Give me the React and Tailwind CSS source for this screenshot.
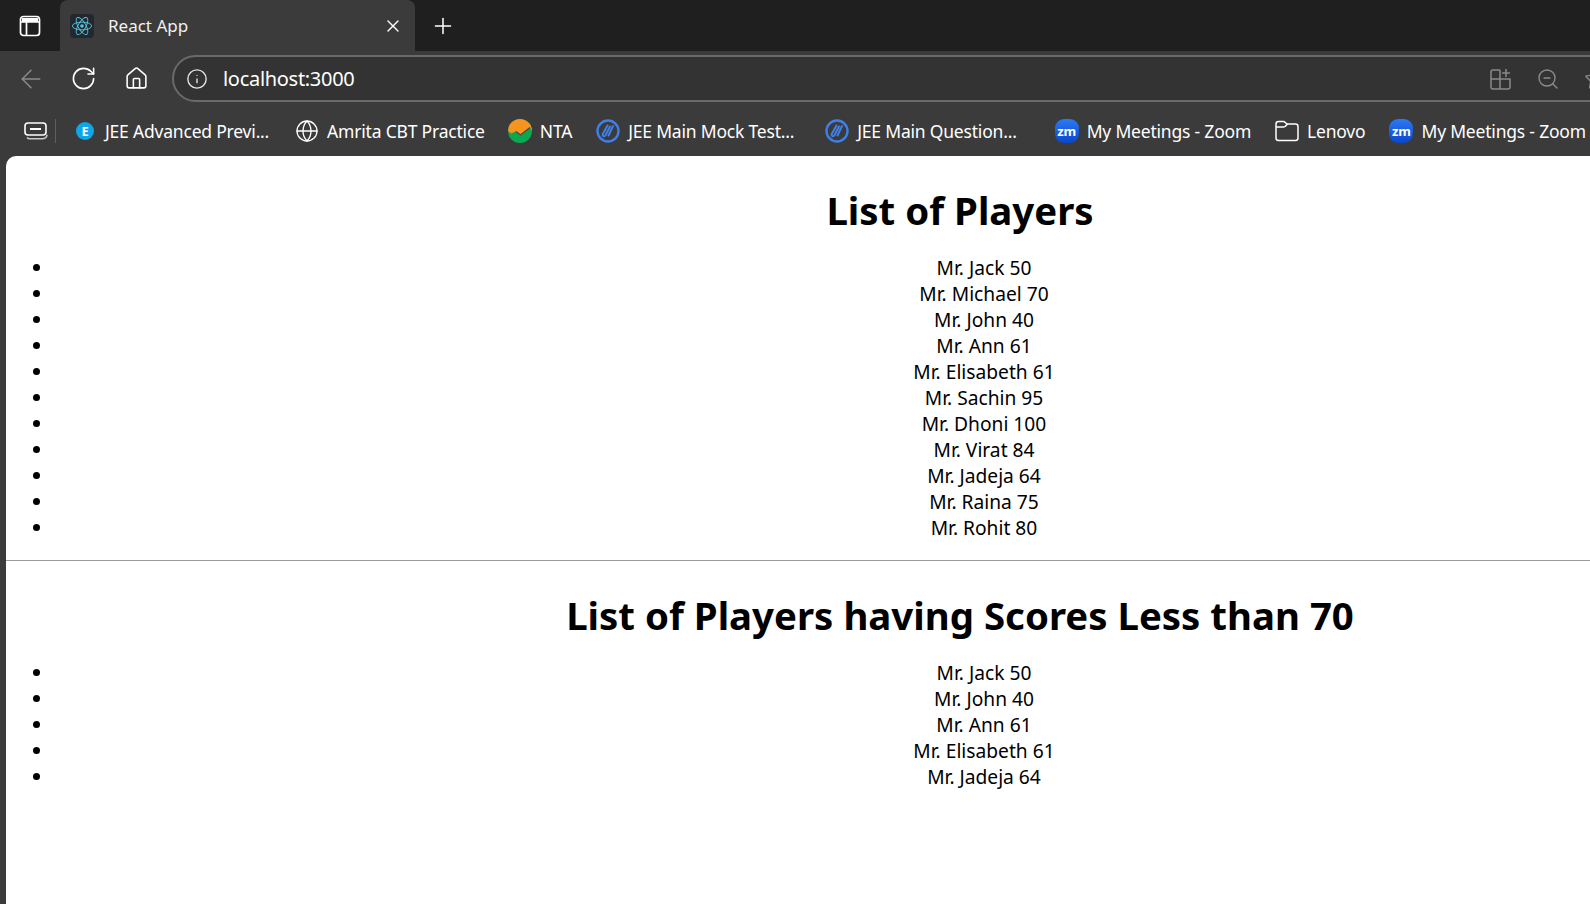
import { ArrowLeft, RotateCw, Home, Info, Globe, X, Plus, ZoomOut, Star } from 'lucide-react'

const allPlayers = [
  'Mr. Jack 50', 'Mr. Michael 70', 'Mr. John 40', 'Mr. Ann 61', 'Mr. Elisabeth 61', 'Mr. Sachin 95',
  'Mr. Dhoni 100', 'Mr. Virat 84', 'Mr. Jadeja 64', 'Mr. Raina 75', 'Mr. Rohit 80',
]
const lowScorers = ['Mr. Jack 50', 'Mr. John 40', 'Mr. Ann 61', 'Mr. Elisabeth 61', 'Mr. Jadeja 64']

function ReactLogo() {
  return (
    <div className="w-6 h-6 rounded bg-[#23272f] flex items-center justify-center">
      <svg width="22" height="22" viewBox="-12 -12 24 24" fill="none" stroke="#58c4dc" strokeWidth="1">
        <circle r="2" fill="#58c4dc" stroke="none" />
        <ellipse rx="10.5" ry="4.2" />
        <ellipse rx="10.5" ry="4.2" transform="rotate(60)" />
        <ellipse rx="10.5" ry="4.2" transform="rotate(120)" />
      </svg>
    </div>
  )
}

function SidebarIcon() {
  return (
    <svg width="22" height="22" viewBox="0 0 22 22" fill="none" stroke="white" strokeWidth="1.7">
      <rect x="1.5" y="1.5" width="19" height="19" rx="3" />
      <path d="M1.5 7h19M7.5 7v13.5" />
      <path d="M3 3h16v4H3z" fill="white" stroke="none" />
    </svg>
  )
}

function CollectionsIcon() {
  return (
    <svg width="24" height="20" viewBox="0 0 24 20" fill="none" stroke="white" strokeWidth="1.6">
      <rect x="1" y="2" width="21" height="12" rx="3" />
      <path d="M6 8h11" strokeWidth="2" />
      <path d="M3 16.5c.8 1 1.6 1.3 3 1.3h12c2.500 0 4.800-1.300 5-4" stroke="#c9c9c9" />
    </svg>
  )
}

function EduIcon() {
  return (
    <svg width="24" height="24" viewBox="0 0 24 24" fill="none" stroke="#3f7fe8">
      <circle cx="12" cy="12" r="10.500" strokeWidth="2.400" />
      <path d="M11.500 6.500 6.800 15c-1 2 1.500 3 2.700 1.200l4.500-8.700M17 7l-4.500 9.500" strokeWidth="2" strokeLinecap="round" />
    </svg>
  )
}

function NtaIcon() {
  return (
    <svg width="24" height="24" viewBox="0 0 24 24">
      <circle cx="12" cy="12" r="12" fill="#0aa84f" />
      <path d="M0 12a12 12 0 0 1 24 0l-2-3.500-9.500 7.500-4.500-3.500-2 .5-2.500 1.500z" fill="#f7931e" />
      <path d="M8 12.500l4.500 3.500L22 8.500" fill="none" stroke="#4a4a3a" strokeWidth="1.300" />
    </svg>
  )
}

function ZoomIcon() {
  return (
    <div className="w-6 h-6 rounded-[9px] bg-gradient-to-b from-[#2b78f5] to-[#0b47c9] flex items-center justify-center">
      <span className="text-white text-[13px] font-bold leading-none font-['Noto_Sans',sans-serif]">zm</span>
    </div>
  )
}

function ExamIcon() {
  return (
    <div className="w-[18px] h-[18px] rounded-full bg-[#0ea5e9] flex items-center justify-center">
      <span className="text-white text-[13px] font-bold leading-none">E</span>
    </div>
  )
}

function FolderIcon() {
  return (
    <svg width="24" height="22" viewBox="0 0 24 22" fill="none" stroke="white" strokeWidth="1.500">
      <path d="M1 4c0-1.500 1-2.500 2.500-2.500h5c1.500 0 2.500 2.500 4 2.500h8c1.500 0 2.500 1 2.500 2.500V18c0 1.500-1 2.500-2.500 2.500h-17C2 20.500 1 19.500 1 18z" />
      <path d="M1 7h7.500c1.500 0 2.500-1 4-3" />
    </svg>
  )
}

function AppsIcon() {
  return (
    <svg width="22" height="22" viewBox="0 0 22 22" fill="none" stroke="#8a8a8a" strokeWidth="1.500">
      <path d="M10 2H3a2 2 0 0 0-2 2v15a2 2 0 0 0 2 2h15a2 2 0 0 0 2-2v-8H1M10 2v19" />
      <path d="M16 1v8M12 5h8" />
    </svg>
  )
}

function Bookmark({ icon, label, className }) {
  return (
    <div className={`flex items-center gap-2 shrink-0 ${className}`}>
      <div className="w-6 flex items-center justify-center shrink-0">{icon}</div>
      <span className="whitespace-nowrap">{label}</span>
    </div>
  )
}

function PlayerList({ items }) {
  return (
    <ul className="list-disc pl-12 my-[19px] text-center text-[19.2px] leading-[26px] text-black">
      {items.map((p) => (
        <li key={p}>{p}</li>
      ))}
    </ul>
  )
}

export default function App() {
  return (
    <div className="h-[904px] w-[1590px] overflow-hidden bg-[#3b3b3b] flex flex-col font-['Noto_Sans','Open_Sans',sans-serif]">
      {/* tab strip */}
      <div className="h-[51px] shrink-0 bg-[#1f1f1f] flex items-end">
        <div className="w-[60px] h-full flex items-center justify-center">
          <SidebarIcon />
        </div>
        <div className="w-[355px] h-[51px] bg-[#3b3b3b] rounded-t-lg rounded-b-none flex items-center pl-[10px] pr-[12px] text-white text-[17px]">
          <ReactLogo />
          <span className="ml-[14px] flex-1 text-[#f0f0f0]">React App</span>
          <X size={20} strokeWidth={1.6} />
        </div>
        <div className="h-full flex items-center ml-[15px]">
          <Plus size={26} strokeWidth={1.4} className="text-white" />
        </div>
      </div>

      {/* toolbar */}
      <div className="h-[55px] shrink-0 flex items-center pl-[16px] text-white">
        <ArrowLeft size={30} strokeWidth={1.2} className="text-[#8b8b8b] shrink-0" />
        <RotateCw size={27} strokeWidth={1.4} className="ml-[24px] shrink-0" />
        <Home size={25} strokeWidth={1.5} className="ml-[27px] shrink-0" />
        <div className="ml-[23px] w-[1450px] h-[47px] shrink-0 rounded-full border-2 border-[#6a6a6a] bg-[#333333] flex items-center pl-[12px]">
          <Info size={22} strokeWidth={1.5} className="text-[#e5e5e5] shrink-0" />
          <span className="ml-[15px] flex-1 text-[20px] tracking-[-0.3px] text-white">localhost:3000</span>
          <div className="flex items-center gap-[24px] pr-[12px]">
            <AppsIcon />
            <ZoomOut size={24} strokeWidth={1.4} className="text-[#8a8a8a]" />
            <Star size={24} strokeWidth={1.4} className="text-[#8a8a8a]" />
          </div>
        </div>
      </div>

      {/* bookmarks */}
      <div className="h-[50px] shrink-0 flex items-center text-[17.500px] tracking-[-0.2px] text-white overflow-hidden">
        <div className="ml-[24px] shrink-0"><CollectionsIcon /></div>
        <div className="ml-[7px] mr-[8px] w-px h-6 bg-[#5f5f5f] shrink-0" />
        <Bookmark className="ml-[9px]" icon={<ExamIcon />} label="JEE Advanced Previ..." />
        <Bookmark className="ml-[26px]" icon={<Globe size={24} strokeWidth={1.3} />} label="Amrita CBT Practice" />
        <Bookmark className="ml-[23px]" icon={<NtaIcon />} label="NTA" />
        <Bookmark className="ml-[24px]" icon={<EduIcon />} label="JEE Main Mock Test..." />
        <Bookmark className="ml-[31px]" icon={<EduIcon />} label="JEE Main Question..." />
        <Bookmark className="ml-[38px]" icon={<ZoomIcon />} label="My Meetings - Zoom" />
        <Bookmark className="ml-[24px]" icon={<FolderIcon />} label="Lenovo" />
        <Bookmark className="ml-[24px]" icon={<ZoomIcon />} label="My Meetings - Zoom" />
      </div>

      {/* page */}
      <div className="flex-1 ml-[6px] w-[1908px] bg-white rounded-tl-[10px] overflow-hidden font-['Noto_Sans',sans-serif]">
        <h1 className="text-center text-[38.400px] font-bold leading-[52px] text-black mt-[28px]">List of Players</h1>
        <PlayerList items={allPlayers} />
        <hr className="border-t border-[#9a9a9a]" />
        <h1 className="text-center text-[38.400px] font-bold leading-[52px] text-black mt-[28px]">List of Players having Scores Less than 70</h1>
        <PlayerList items={lowScorers} />
      </div>
    </div>
  )
}
